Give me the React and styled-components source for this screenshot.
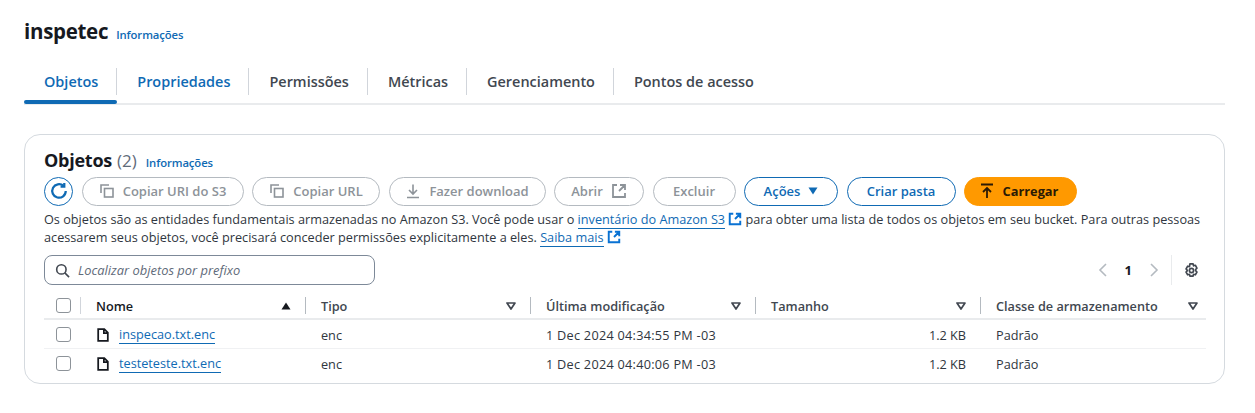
import React from "react";
import styled, { createGlobalStyle } from "styled-components";

const BLUE = "#0972d3";
const LINK = "#0f6ab4";
const DISABLED = "#8d9399";

const GlobalStyle = createGlobalStyle`
  html, body {
    margin: 0;
    background: #fff;
    color: #16191f;
    font-family: "Open Sans", "Noto Sans", "Liberation Sans", sans-serif;
  }
`;

const Icon = ({ children, size = 16, sw = 2 }) => (
  <svg width={size} height={size} viewBox="0 0 16 16" fill="none" stroke="currentColor" strokeWidth={sw} style={{ flex: "none" }}>
    {children}
  </svg>
);

const CopyIcon = () => (
  <Icon sw={1.6}>
    <path d="M10 2H2v8" />
    <rect x="5.5" y="5.5" width="8.5" height="8.5" />
  </Icon>
);
const DownloadIcon = () => (
  <Icon sw={1.6}>
    <path d="M2 14.5h12M8 1.5v9M4 7l4 4 4-4" />
  </Icon>
);
const ExternalIcon = ({ size = 16, sw = 1.8 }) => (
  <Icon size={size} sw={sw}>
    <path d="M6 2H2v12h12v-4M9 2h5v5M14 2L8 8" />
  </Icon>
);
const UploadIcon = () => (
  <Icon sw={1.8}>
    <path d="M2 1.5h12M8 15V5M4 9l4-4 4 4" />
  </Icon>
);
const RefreshIcon = () => (
  <Icon size={18} sw={2}>
    <path d="M14 8a6 6 0 1 1-2-4.5" />
    <path d="M12.7 0.8v3.2H9.4" />
  </Icon>
);
const SearchIcon = () => (
  <Icon size={15} sw={1.7}>
    <circle cx="6.8" cy="6.8" r="5" />
    <path d="M10.5 10.5L15 15" />
  </Icon>
);
const FileIcon = () => (
  <Icon size={14} sw={2}>
    <path d="M2.5 1.2h7l4 4v9.6h-11zM9 1.2v4.6h4.5" />
  </Icon>
);
const GearIcon = () => (
  <Icon size={15} sw={1.8}>
    <circle cx="8" cy="8" r="2.2" />
    <path d="M6.3 1h3.4l.5 2 1.9-.6 1.7 3-1.4 1.5v1.2l1.4 1.5-1.7 3-1.9-.6-.5 2H6.3l-.5-2-1.9.6-1.7-3 1.4-1.5V7.9L2.2 6.4l1.7-3 1.9.6z" strokeLinejoin="round" />
  </Icon>
);
// kind: "up" solid, "down" solid, "outline" for the unsorted column marker
const Caret = ({ kind }) => (
  <svg width="10" height="8" viewBox="0 0 10 8" style={{ flex: "none" }}>
    {kind === "outline" && <path d="M1 1h8L5 7z" fill="none" stroke="currentColor" strokeWidth="1.7" strokeLinejoin="round" />}
    {kind === "up" && <path d="M0.5 7.5h9L5 0.5z" fill="currentColor" />}
    {kind === "down" && <path d="M0.5 0.5h9L5 7.5z" fill="currentColor" />}
  </svg>
);
const Chevron = ({ flip }) => (
  <svg width="10" height="14" viewBox="0 0 10 14" fill="none" stroke="#b4bac0" strokeWidth="1.6">
    <path d={flip ? "M2 1l6 6-6 6" : "M8 1L2 7l6 6"} />
  </svg>
);

const tabs = ["Objetos", "Propriedades", "Permissões", "Métricas", "Gerenciamento", "Pontos de acesso"];
const columns = [
  { name: "Nome", sorted: true },
  { name: "Tipo" },
  { name: "Última modificação" },
  { name: "Tamanho" },
  { name: "Classe de armazenamento", last: true },
];
const files = [
  { name: "inspecao.txt.enc", date: "1 Dec 2024 04:34:55 PM -03" },
  { name: "testeteste.txt.enc", date: "1 Dec 2024 04:40:06 PM -03" },
];

const App = () => {
  return (
    <Page>
      <GlobalStyle />
      <Header>
        <PageTitle>inspetec</PageTitle>
        <Info>Informações</Info>
      </Header>
      <TabBar>
        {tabs.map((tab, idx) => (
          <Tab key={tab} $active={idx === 0} $tone={idx < 2 ? LINK : "#414750"} $last={idx === tabs.length - 1}>
            <span>{tab}</span>
          </Tab>
        ))}
      </TabBar>
      <Card>
        <CardTitle>
          <h2>Objetos</h2>
          <Count>(2)</Count>
          <Info>Informações</Info>
        </CardTitle>
        <Toolbar>
          <RoundButton><RefreshIcon /></RoundButton>
          <Button $w={162} disabled><CopyIcon />Copiar URI do S3</Button>
          <Button $w={128} disabled><CopyIcon />Copiar URL</Button>
          <Button $w={157} disabled><DownloadIcon />Fazer download</Button>
          <Button $w={90} disabled>Abrir<ExternalIcon /></Button>
          <Button $w={83} disabled>Excluir</Button>
          <Button $w={94} $kind="normal">Ações<Caret kind="down" /></Button>
          <Button $w={109} $kind="normal">Criar pasta</Button>
          <Button $w={113} $kind="primary"><UploadIcon />Carregar</Button>
        </Toolbar>
        <Description>
          Os objetos são as entidades fundamentais armazenadas no Amazon S3. Você pode usar o{" "}
          <TextLink>inventário do Amazon S3</TextLink>
          <LinkIcon><ExternalIcon size={14} sw={2.2} /></LinkIcon> para obter uma lista de todos os
          objetos em seu bucket. Para outras pessoas acessarem seus objetos, você precisará conceder permissões explicitamente a eles.{" "}
          <TextLink>Saiba mais</TextLink>
          <LinkIcon><ExternalIcon size={14} sw={2.2} /></LinkIcon>
        </Description>
        <FilterRow>
          <SearchBox>
            <SearchIcon />
            <em>Localizar objetos por prefixo</em>
          </SearchBox>
          <Pager>
            <Chevron />
            <b>1</b>
            <Chevron flip />
            <PagerDivider />
            <GearIcon />
          </Pager>
        </FilterRow>
        <Table>
          <HeadRow>
            <CheckCell $divider><Check /></CheckCell>
            {columns.map((col) => (
              <HeadCell key={col.name} $last={col.last}>
                {col.name}
                <Caret kind={col.sorted ? "up" : "outline"} />
              </HeadCell>
            ))}
          </HeadRow>
          {files.map((file) => (
            <BodyRow key={file.name}>
              <CheckCell><Check /></CheckCell>
              <NameCell>
                <FileIcon />
                <TextLink>{file.name}</TextLink>
              </NameCell>
              <Cell>enc</Cell>
              <DateCell>{file.date}</DateCell>
              <SizeCell>1.2 KB</SizeCell>
              <Cell>Padrão</Cell>
            </BodyRow>
          ))}
        </Table>
      </Card>
    </Page>
  );
};

const Page = styled.div`
  width: 1201px;
  height: 413px;
  padding: 17px 30px 0 24px;
  overflow: hidden;
`;
const Header = styled.div`
  display: flex;
  align-items: baseline;
  gap: 8px;
  height: 30px;
`;
const PageTitle = styled.h1`
  margin: 0;
  font-size: 20.5px;
  line-height: 28px;
  font-weight: 700;
  letter-spacing: -0.3px;
`;
const Info = styled.a`
  font-size: 11.3px;
  font-weight: 600;
  color: ${LINK};
  letter-spacing: -0.1px;
`;
const TabBar = styled.div`
  display: flex;
  margin-top: 16px;
  height: 40px;
  border-bottom: 2px solid #e9ebed;
`;
const Tab = styled.div`
  position: relative;
  display: flex;
  align-items: center;
  height: 36px;
  padding: 0 19px 4px 20px;
  font-size: 14.45px;
  font-weight: 600;
  color: ${(p) => p.$tone};
  span {
    line-height: 29px;
  }
  &::after {
    content: "";
    display: ${(p) => (p.$last ? "none" : "block")};
    position: absolute;
    right: 0;
    top: 5px;
    height: 27px;
    width: 1px;
    background: #d1d5db;
  }
  ${(p) =>
    p.$active &&
    `&::before {
      content: "";
      position: absolute;
      left: 0;
      right: 0;
      bottom: -1px;
      height: 4px;
      border-radius: 2px;
      background: #0f6ab4;
    }`}
`;
const Card = styled.section`
  box-sizing: border-box;
  width: 1201px;
  height: 250px;
  margin-top: 29px;
  padding: 14px 19px 0 19px;
  border: 1px solid #d5dadf;
  border-radius: 16px;
`;
const CardTitle = styled.div`
  display: flex;
  align-items: baseline;
  height: 24px;
  h2 {
    margin: 0;
    font-size: 18px;
    line-height: 22px;
    font-weight: 700;
    letter-spacing: -0.25px;
  }
  ${Info} {
    margin-left: 9px;
  }
`;
const Count = styled.span`
  margin-left: 5px;
  font-size: 17px;
  color: #5f6b7a;
`;
const Toolbar = styled.div`
  display: flex;
  align-items: center;
  gap: 8.5px;
  margin-top: 3px;
  height: 30px;
`;
const RoundButton = styled.button`
  box-sizing: border-box;
  width: 29px;
  height: 29px;
  display: flex;
  align-items: center;
  justify-content: center;
  padding: 0;
  border: 1.5px solid ${LINK};
  border-radius: 50%;
  background: #fff;
  color: ${LINK};
`;
const Button = styled.button`
  box-sizing: border-box;
  width: ${(p) => p.$w}px;
  height: 29px;
  display: flex;
  align-items: center;
  justify-content: center;
  gap: 8px;
  padding: 0 ${(p) => (p.$kind === "primary" ? "4px" : "0")} 0 0;
  font: ${(p) => (p.$kind === "primary" ? "700 12.8px" : "600 13px")} "Open Sans", "Noto Sans", sans-serif;
  border-radius: 15px;
  border: 1.5px solid
    ${(p) => (p.$kind === "normal" ? LINK : p.$kind === "primary" ? "#ff9900" : "#b4bac0")};
  background: ${(p) => (p.$kind === "primary" ? "#ff9900" : "#fff")};
  color: ${(p) => (p.$kind === "normal" ? LINK : p.$kind === "primary" ? "#2b1a05" : DISABLED)};
`;
const Description = styled.p`
  margin: 4px 0 0;
  width: 1170px;
  font-size: 12.7px;
  line-height: 18px;
  color: #2f3640;
`;
const TextLink = styled.a`
  color: ${LINK};
  border-bottom: 1px solid ${LINK};
`;
const LinkIcon = styled.span`
  display: inline-block;
  height: 14px;
  margin-left: 3px;
  line-height: 0;
  vertical-align: -2px;
  color: ${BLUE};
`;
const FilterRow = styled.div`
  display: flex;
  align-items: center;
  justify-content: space-between;
  margin-top: 8px;
  height: 32px;
`;
const SearchBox = styled.div`
  box-sizing: border-box;
  width: 331px;
  height: 30px;
  display: flex;
  align-items: center;
  gap: 8px;
  padding: 0 10px;
  border: 1.5px solid #7d8998;
  border-radius: 8px;
  color: #414750;
  em {
    font-size: 12.9px;
    color: #5f6b7a;
  }
`;
const Pager = styled.div`
  display: flex;
  align-items: center;
  gap: 12px;
  padding-right: 6px;
  color: #414750;
  b {
    margin: 0 5px;
    font-size: 13px;
    color: #16191f;
  }
`;
const PagerDivider = styled.span`
  width: 1px;
  height: 30px;
  background: #e9ebed;
`;
const Table = styled.div`
  display: grid;
  grid-template-columns: 37px repeat(5, 225px);
  margin-top: 6px;
  width: 1162px;
`;
const HeadRow = styled.div`
  display: contents;
  & > div {
    box-sizing: border-box;
    height: 28px;
    padding-top: 1px;
    border-bottom: 2px solid #e9ebed;
  }
`;
const BodyRow = styled.div`
  display: contents;
  & > div {
    box-sizing: border-box;
    height: 29px;
    padding-top: 1px;
    border-bottom: 1px solid #f0f1f3;
  }
  &:last-child > div {
    height: 28px;
    border-bottom: none;
  }
`;
const CheckCell = styled.div`
  position: relative;
  display: flex;
  align-items: center;
  padding-left: 12px;
  ${(p) =>
    p.$divider &&
    `&::after {
      content: "";
      position: absolute;
      right: 0;
      top: 5px;
      height: 17px;
      width: 1px;
      background: #d1d5db;
    }`}
`;
const Check = styled.span`
  box-sizing: border-box;
  width: 15px;
  height: 15px;
  border: 1.5px solid #8d9399;
  border-radius: 3px;
`;
const HeadCell = styled.div`
  position: relative;
  display: flex;
  align-items: center;
  justify-content: space-between;
  padding: 0 ${(p) => (p.$last ? "8px" : "15px")} 0 15px;
  font-size: 12.7px;
  font-weight: 600;
  color: #414750;
  &:nth-child(2) {
    color: #16191f;
  }
  &::after {
    content: "";
    display: ${(p) => (p.$last ? "none" : "block")};
    position: absolute;
    right: 0;
    top: 5px;
    height: 17px;
    width: 1.5px;
    background: #b4bac0;
  }
`;
const Cell = styled.div`
  display: flex;
  align-items: center;
  padding: 0 15px;
  font-size: 12.7px;
  color: #2f3640;
`;
const NameCell = styled(Cell)`
  gap: 9px;
  color: #16191f;
`;
const DateCell = styled(Cell)`
  letter-spacing: 0.27px;
`;
const SizeCell = styled(Cell)`
  justify-content: flex-end;
`;

export default App;
